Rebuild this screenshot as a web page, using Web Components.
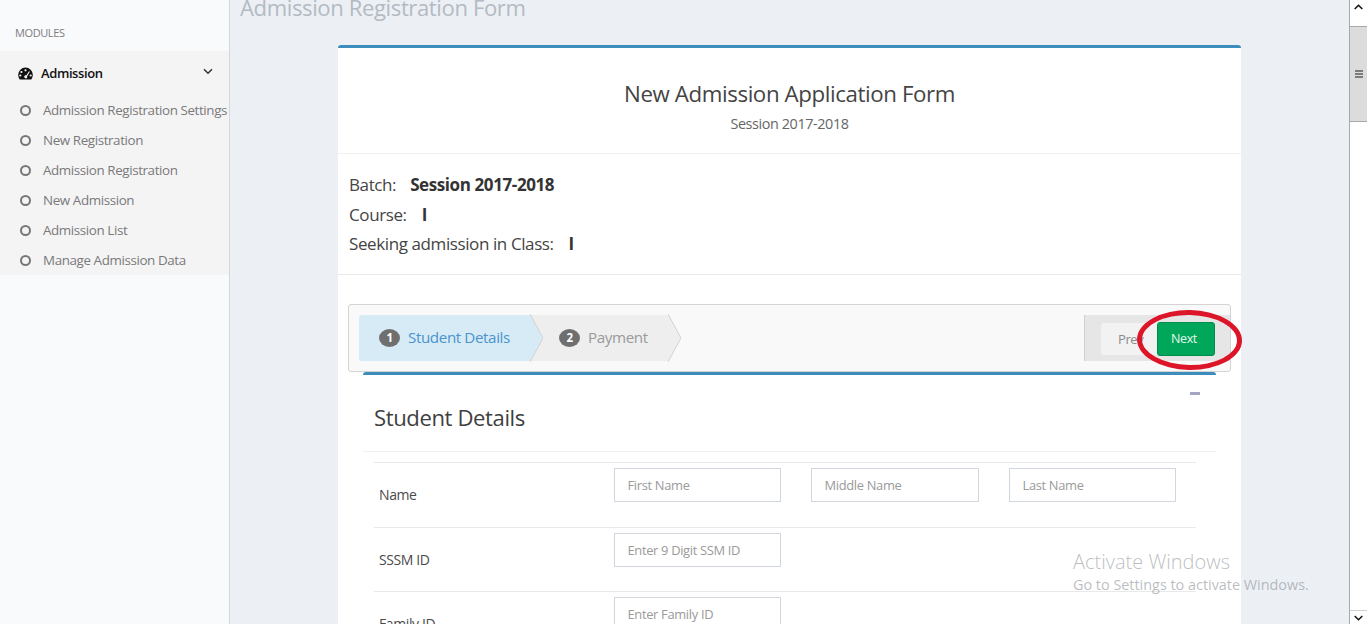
<!DOCTYPE html>
<html lang="en">
<head>
<meta charset="utf-8">
<title>Admission Registration Form</title>
<style>
	html, body { margin: 0; padding: 0; height: 624px; overflow: hidden; background: #ecf0f5; }
	body { font-family: "Open Sans", "Noto Sans", sans-serif; color: #333; letter-spacing: -0.025em; }
</style>
</head>
<body>
<app-shell>
	<admin-sidebar slot="side">
		<side-item>Admission Registration Settings</side-item>
		<side-item>New Registration</side-item>
		<side-item>Admission Registration</side-item>
		<side-item>New Admission</side-item>
		<side-item>Admission List</side-item>
		<side-item>Manage Admission Data</side-item>
	</admin-sidebar>
	<form-card heading="New Admission Application Form" session="Session 2017-2018">
		<info-line label="Batch:" value="Session 2017-2018" gap="14"></info-line>
		<info-line label="Course:" value="I" gap="15"></info-line>
		<info-line label="Seeking admission in Class:" value="I" gap="15"></info-line>
		<wizard-bar slot="wizard">
			<wizard-step num="1" active>Student Details</wizard-step>
			<wizard-step num="2">Payment</wizard-step>
		</wizard-bar>
		<detail-box slot="details" heading="Student Details">
			<form-row label="Name">
				<text-field hint="First Name"></text-field>
				<text-field hint="Middle Name"></text-field>
				<text-field hint="Last Name"></text-field>
			</form-row>
			<form-row label="SSSM ID">
				<text-field hint="Enter 9 Digit SSM ID"></text-field>
			</form-row>
			<form-row label="Family ID">
				<text-field hint="Enter Family ID"></text-field>
			</form-row>
		</detail-box>
	</form-card>
	<fake-scrollbar slot="bar"></fake-scrollbar>
	<activate-note slot="note"></activate-note>
</app-shell>

<script>
// small helper, every element just sets its markup in an open shadow root
function shadowOf(el, html) {
	const root = el.attachShadow({ mode: 'open' });
	root.innerHTML = html;
	return root;
}

class AppShell extends HTMLElement {
	constructor() {
		super();
		shadowOf(this, `
		<style>
			:host { display: grid; grid-template-columns: 230px 1119px 18px; width: 1367px; height: 624px; overflow: hidden; position: relative; }
			main { min-width: 0; height: 624px; overflow: hidden; padding: 0 0 0 10px; box-sizing: border-box; }
			h1 { margin: -9px 0 0; height: 54px; font-size: 22.1px; line-height: 32px; font-weight: 400; color: #b4bac2; }
			.wrap { margin-left: 98px; width: 903px; }
		</style>
		<slot name="side"></slot>
		<main>
			<h1>Admission Registration Form</h1>
			<div class="wrap"><slot></slot></div>
		</main>
		<slot name="bar"></slot>
		<slot name="note"></slot>
		`);
	}
}

class AdminSidebar extends HTMLElement {
	constructor() {
		super();
		shadowOf(this, `
		<style>
			:host { display: block; height: 624px; background: #f9fafc; border-right: 1px solid #d2d6de; box-sizing: border-box; }
			.label { height: 51px; box-sizing: border-box; padding: 26px 0 0 15px; font-size: 11px; line-height: 14px; color: #7d7d7d; }
			.menu { background: #f4f4f5; }
			.head { display: flex; align-items: center; height: 44px; padding: 0 15px 0 18px; font-size: 13px; font-weight: 600; color: #111; }
			.head svg.gauge { width: 15px; height: 13px; margin-right: 8px; }
			.head span { flex: 1; }
			.head svg.chev { width: 10px; height: 7px; margin: 0 1px 3px 0; }
		</style>
		<div class="label">MODULES</div>
		<div class="menu">
			<div class="head">
				<svg class="gauge" viewBox="0 0 15 13">
					<path fill="#111" fill-rule="evenodd" d="M7.5 0.5A7.3 7.3 0 0 0 .2 7.8c0 1.9.6 3.4 1.6 4.7h11.4c1-1.3 1.6-2.8 1.6-4.7A7.3 7.3 0 0 0 7.5.5zM7.5 2.2a1.1 1.1 0 1 1 0 2.2 1.1 1.1 0 0 1 0-2.2zM3.4 3.9a1.1 1.1 0 1 1 0 2.2 1.1 1.1 0 0 1 0-2.2zM2.3 7.4a1.1 1.1 0 1 1 0 2.2 1.1 1.1 0 0 1 0-2.2zM12.7 7.4a1.1 1.1 0 1 1 0 2.2 1.1 1.1 0 0 1 0-2.2zM11 4.2l.9.5-2.8 4.6c.3.7.1 1.5-.5 1.9-.8.5-1.8.2-2.2-.6-.4-.7-.2-1.6.5-2 .4-.3.9-.3 1.3-.2z"/>
				</svg>
				<span>Admission</span>
				<svg class="chev" viewBox="0 0 10 7"><path d="M1 1.2l4 4 4-4" fill="none" stroke="#333" stroke-width="1.5"/></svg>
			</div>
			<slot></slot>
		</div>
		`);
	}
}

class SideItem extends HTMLElement {
	constructor() {
		super();
		shadowOf(this, `
		<style>
			:host { display: flex; align-items: center; height: 30px; padding-left: 20px; font-size: 13.4px; color: #7a7a7a; white-space: nowrap; }
			i { display: block; width: 7px; height: 7px; border: 2.5px solid #777; border-radius: 50%; margin-right: 12px; flex: none; }
		</style>
		<i></i><slot></slot>
		`);
	}
}

class FormCard extends HTMLElement {
	constructor() {
		super();
		shadowOf(this, `
		<style>
			:host { display: block; background: #fff; border-top: 3px solid #3c8dbc; border-radius: 3px 3px 0 0; height: 600px; }
			header { height: 106px; box-sizing: border-box; padding-top: 31px; text-align: center; border-bottom: 1px solid #f0f0f0; }
			h2 { margin: 0 0 5px; font-size: 22.3px; line-height: 30px; font-weight: 400; color: #444; }
			p { margin: 0; font-size: 14.4px; line-height: 20px; color: #666; }
			.info { padding: 16px 11px 15.5px; border-bottom: 1px solid #e8e8e8; }
			.body { padding: 29px 10px 0; }
		</style>
		<header>
			<h2>${this.getAttribute('heading')}</h2>
			<p>${this.getAttribute('session')}</p>
		</header>
		<div class="info"><slot></slot></div>
		<div class="body">
			<slot name="wizard"></slot>
			<slot name="details"></slot>
		</div>
		`);
	}
}

class InfoLine extends HTMLElement {
	constructor() {
		super();
		const gap = this.getAttribute('gap');
		shadowOf(this, `
		<style>
			:host { display: flex; height: 29.5px; align-items: center; font-size: 17px; color: #444; white-space: nowrap; }
			b { margin-left: ${gap}px; font-weight: 700; color: #333; }
		</style>
		<span>${this.getAttribute('label')}</span><b>${this.getAttribute('value')}</b>
		`);
	}
}

class WizardBar extends HTMLElement {
	constructor() {
		super();
		shadowOf(this, `
		<style>
			:host { display: flex; position: relative; justify-content: space-between; height: 68px; box-sizing: border-box; padding: 10px 0 0 10px; background: #f9f9f9; border: 1px solid #d4d4d4; border-radius: 3px; }
			.steps { display: flex; height: 46px; }
			.tools { display: flex; align-items: center; height: 46px; width: 146px; box-sizing: border-box; background: #e6e6e6; border-left: 1px solid #d0d0d0; padding: 2px 0 0 16px; }
			.prev { width: 64px; height: 32px; box-sizing: border-box; padding-left: 17px; margin-right: -8px; line-height: 32px; background: #f2f2f2; border-radius: 3px; font-size: 13px; color: #8a8a8a; }
			.next { width: 58px; height: 34px; position: relative; line-height: 32px; box-sizing: border-box; text-align: center; padding-right: 4px; background: #00a65a; border: 1px solid #008d4c; border-radius: 3px; font-size: 12.5px; font-weight: 500; color: #e6f8ee; }
			.mark { position: absolute; left: 788px; top: 5px; width: 105px; height: 60px; box-sizing: border-box; border: 5px solid #dd1528; border-radius: 50%; transform: rotate(1deg); }
		</style>
		<div class="steps"><slot></slot></div>
		<div class="tools"><div class="prev">Prev</div><div class="next">Next</div></div>
		<div class="mark"></div>
		`);
	}
}

class WizardStep extends HTMLElement {
	constructor() {
		super();
		const on = this.hasAttribute('active');
		const bg = on ? '#d7ebf7' : '#eeeeee';
		shadowOf(this, `
		<style>
			:host { display: flex; height: 46px; position: relative; z-index: ${on ? 2 : 1}; margin-right: -13px; }
			.body { display: flex; align-items: center; box-sizing: border-box; width: ${on ? 171 : 138}px; padding: 0 0 2px ${on ? 20 : 29}px; background: ${bg}; border-radius: ${on ? '3px 0 0 3px' : '0'}; font-size: 15.2px; color: ${on ? '#4a94cc' : '#9a9a9a'}; white-space: nowrap; }
			i { display: block; width: 21px; height: 18px; margin: 2px 8px 0 0; border-radius: 50%; background: #6f6f6f; color: #fff; font: 700 11.5px/18px "Open Sans", sans-serif; text-align: center; flex: none; }
			svg { display: block; width: 13px; height: 48px; margin-top: -1px; }
		</style>
		<div class="body"><i>${this.getAttribute('num')}</i><slot></slot></div>
		<svg viewBox="0 0 13 48"><path d="M0 0L13 24 0 48z" fill="${bg}"/><path d="M0 0L13 24 0 48" fill="none" stroke="#d2d2d2"/></svg>
		`);
	}
}

class DetailBox extends HTMLElement {
	constructor() {
		super();
		shadowOf(this, `
		<style>
			:host { display: block; margin: 0 15px 0 15px; background: #fff; border-top: 3px solid #3c8dbc; border-radius: 3px 3px 0 0; }
			.top { display: flex; justify-content: space-between; height: 76px; padding: 0 16px 0 11px; border-bottom: 1px solid #f0f0f0; }
			h3 { margin: 26px 0 0; font-size: 22.1px; line-height: 32px; font-weight: 400; color: #3f3f3f; }
			.tool { width: 10px; height: 3px; margin-top: 17px; background: #a5a5c4; }
			.rows { padding: 10px 20px 0 11px; }
		</style>
		<div class="top"><h3>${this.getAttribute('heading')}</h3><div class="tool"></div></div>
		<div class="rows"><slot></slot></div>
		`);
	}
}

class FormRow extends HTMLElement {
	constructor() {
		super();
		shadowOf(this, `
		<style>
			:host { display: grid; grid-template-columns: 210px 167px 168px 167px; column-gap: 30px; height: 64.5px; box-sizing: border-box; border-top: 1px solid #e9e9e9; padding-top: 5px; }
			.name { padding: 17px 0 0 5px; font-size: 14px; line-height: 20px; color: #4a4a4a; white-space: nowrap; }
			::slotted(text-field) { align-self: start; }
		</style>
		<div class="name">${this.getAttribute('label')}</div>
		<slot></slot>
		`);
	}
}

class TextField extends HTMLElement {
	constructor() {
		super();
		shadowOf(this, `
		<style>
			:host { display: block; }
			input { display: block; width: 100%; height: 34px; box-sizing: border-box; padding: 0 12.5px; border: 1px solid #d2d6de; background: #fff; font: 12.9px "Open Sans", sans-serif; letter-spacing: -0.025em; outline: none; }
			input::placeholder { color: #9a9a9a; opacity: 1; }
		</style>
		<input type="text" placeholder="${this.getAttribute('hint')}">
		`);
	}
}

class FakeScrollbar extends HTMLElement {
	constructor() {
		super();
		shadowOf(this, `
		<style>
			:host { display: flex; flex-direction: column; height: 624px; box-sizing: border-box; background: #fff; border-left: 1px solid #a8a8a8; }
			.btn { height: 13px; flex: none; display: flex; align-items: center; justify-content: center; }
			.btn svg { width: 9px; height: 6px; }
			.gap { height: 13px; }
			.thumb { height: 96px; box-sizing: border-box; background: #dcdcdc; border-top: 1px solid #a8a8a8; border-bottom: 1px solid #a8a8a8; display: flex; flex-direction: column; align-items: center; justify-content: center; gap: 1px; }
			.thumb i { display: block; width: 8px; height: 2px; background: #7c7c7c; }
			.fill { flex: 1; }
			.end { border-top: 1px solid #d0d0d0; }
		</style>
		<div class="btn"><svg viewBox="0 0 9 6"><path d="M.7 5L4.5 1.2 8.3 5" fill="none" stroke="#111" stroke-width="1.5"/></svg></div>
		<div class="gap"></div>
		<div class="thumb"><i></i><i></i><i></i></div>
		<div class="fill"></div>
		<div class="btn end"><svg viewBox="0 0 9 6"><path d="M.7 1L4.5 4.8 8.3 1" fill="none" stroke="#111" stroke-width="1.5"/></svg></div>
		`);
	}
}

// the windows watermark sits on top of the whole page
class ActivateNote extends HTMLElement {
	constructor() {
		super();
		shadowOf(this, `
		<style>
			:host { display: block; position: absolute; left: 1073px; top: 549px; color: rgba(120,125,130,0.5); font-family: "Open Sans", sans-serif; white-space: nowrap; pointer-events: none; letter-spacing: 0; }
			div { font-size: 20px; line-height: 26px; font-weight: 300; }
			p { margin: 0; font-size: 14.4px; line-height: 20px; }
		</style>
		<div>Activate Windows</div>
		<p>Go to Settings to activate Windows.</p>
		`);
	}
}

customElements.define('app-shell', AppShell);
customElements.define('admin-sidebar', AdminSidebar);
customElements.define('side-item', SideItem);
customElements.define('form-card', FormCard);
customElements.define('info-line', InfoLine);
customElements.define('wizard-bar', WizardBar);
customElements.define('wizard-step', WizardStep);
customElements.define('detail-box', DetailBox);
customElements.define('form-row', FormRow);
customElements.define('text-field', TextField);
customElements.define('fake-scrollbar', FakeScrollbar);
customElements.define('activate-note', ActivateNote);
</script>
</body>
</html>
